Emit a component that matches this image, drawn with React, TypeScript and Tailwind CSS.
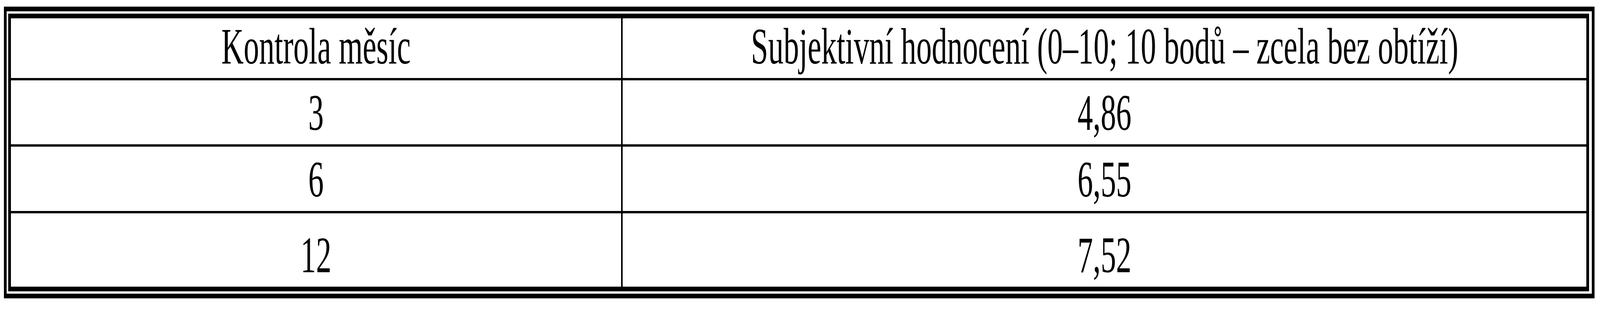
const ROWS = [
  {
    month: "Kontrola měsíc",
    score: "Subjektivní hodnocení (0–10; 10 bodů – zcela bez obtíží)",
    height: "h-[153px]",
    first: true,
  },
  { month: "3", score: "4,86", height: "h-[170px]", first: false },
  { month: "6", score: "6,55", height: "h-[171px]", first: false },
  { month: "12", score: "7,52", height: "h-[194px]", first: false },
];

function Cell({ text }: { text: string }) {
  return (
    <span className="inline-block origin-center scale-x-[0.598] text-[132px] leading-none whitespace-nowrap">
      {text}
    </span>
  );
}

export default function App() {
  return (
    <div
      className="h-[800px] w-full overflow-hidden bg-white pl-[10px] pt-[17px] text-black"
      style={{ fontFamily: '"Liberation Serif", "Times New Roman", serif' }}
    >
      <div className="w-[4072px] border-x-[7px] border-y-[12px] border-black pt-[6px] pb-[6px] pl-[4px] pr-[7px]">
        <div className="flex flex-col border-x-[7px] border-y-[12px] border-black">
          {ROWS.map((row) => (
            <div
              key={row.month}
              className={`flex ${row.height} ${row.first ? "" : "border-t-[6px] border-black"}`}
            >
              <div className="flex w-[1566px] shrink-0 items-end justify-center border-r-[4px] border-black pb-[15px]">
                <Cell text={row.month} />
              </div>
              <div className="flex min-w-0 flex-1 items-end justify-center pb-[15px]">
                <Cell text={row.score} />
              </div>
            </div>
          ))}
        </div>
      </div>
    </div>
  );
}
